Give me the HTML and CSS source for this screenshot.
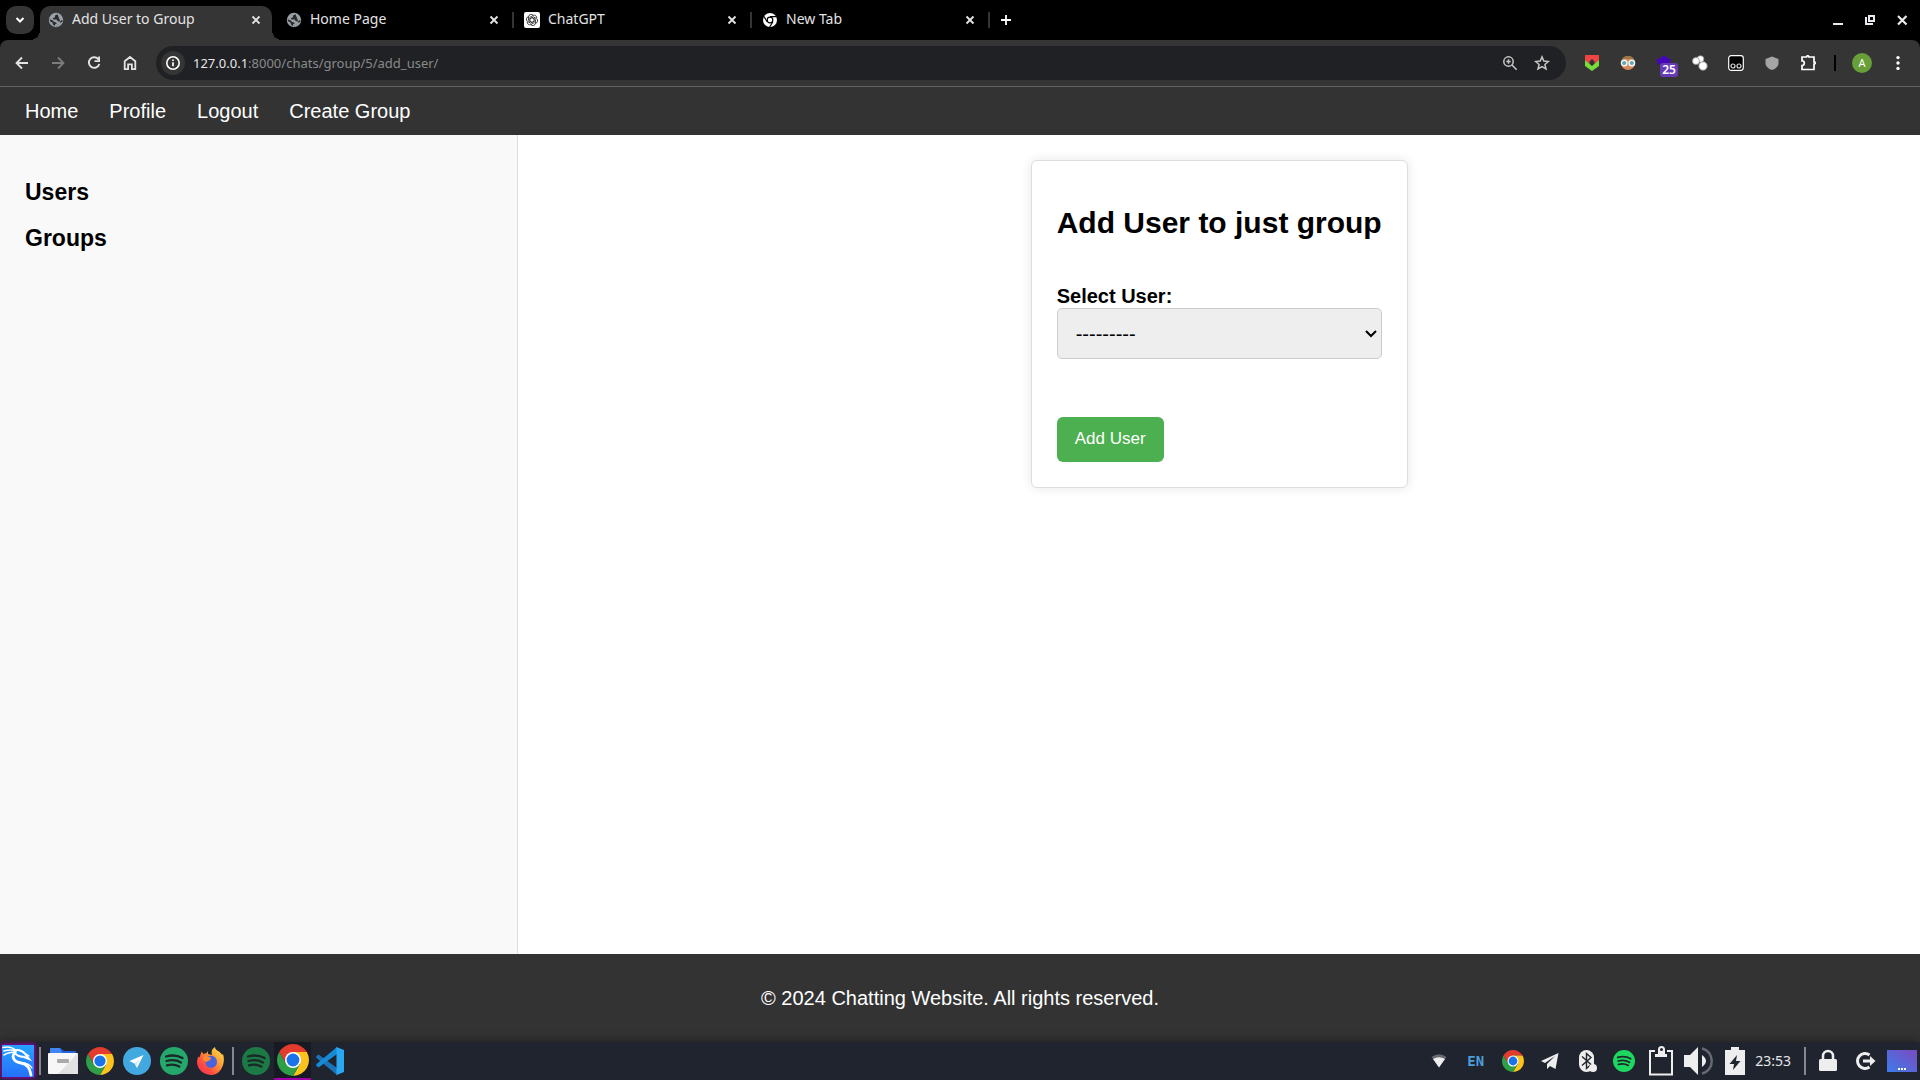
FILE: index.html
```html
<!DOCTYPE html>
<html lang="en">
<head>
<meta charset="utf-8">
<title>Add User to Group</title>
<link rel="stylesheet" href="styles.css">
</head>
<body>
<svg class="defs" aria-hidden="true">
  <symbol id="chrome" viewBox="0 0 48 48">
    <path fill="#e33b2e" d="M4.950 13A22 22 0 0 1 43.050 13H24L14.470 29.500Z"/>
    <path fill="#fcc31e" d="M43.050 13A22 22 0 0 1 24 46L33.530 29.500 24 13Z"/>
    <path fill="#2c9f48" d="M24 46A22 22 0 0 1 4.950 13L14.470 29.500H33.530Z"/>
    <circle cx="24" cy="24" r="11" fill="#fff"/><circle cx="24" cy="24" r="8.800" fill="#1a73e8"/>
  </symbol>
  <symbol id="spotify" viewBox="0 0 28 28">
    <circle cx="14" cy="14" r="14" fill="currentColor"/>
    <path d="M6 9.500c5.500-1.600 12-1 16.500 1.600M6.500 14c5-1.400 10.500-.8 14.500 1.500M7 18.300c4.200-1.200 8.800-.7 12.300 1.300" fill="none" stroke="#1b2a28" stroke-width="2.300" stroke-linecap="round"/>
  </symbol>
  <symbol id="globe" viewBox="0 0 16 16">
    <circle cx="8" cy="8" r="7.200" fill="#9aa0a6"/>
    <path fill="#2b2c2f" d="M9.500 2.200 7 3.400v1.800L4.800 6.300l.6 1.200h3.200l1.200 1.800 2 .2 1.700-1.300 1-.2-.3 2-2 .8-1.500 1.900-1.700.3-.4 1.600-1.800-.2.200-2 1.600-.6-.4-1.400-2-.3L4.800 8.500 1.800 7.200 2 9.200l2.400 1.200.6 2 1.800 1.900 1.200.3 1.200-1.600 2-.8 1.200-2.400z"/>
  </symbol>
  <symbol id="close" viewBox="0 0 16 16"><path d="m4.500 4.500 7 7m0-7-7 7" fill="none" stroke="currentColor" stroke-width="1.900"/></symbol>
</svg>

<header class="browser">
  <div class="tabstrip">
    <button class="tab-search" aria-label="Search tabs"><svg width="12" height="12" viewBox="0 0 12 12"><path d="m2.500 4 3.500 3.500L9.500 4" fill="none" stroke="#fff" stroke-width="2"/></svg></button>
    <div class="tabs">
      <div class="tab active"><svg class="favicon"><use href="#globe"/></svg><span>Add User to Group</span><button aria-label="Close tab"><svg><use href="#close"/></svg></button></div>
      <div class="tab"><svg class="favicon"><use href="#globe"/></svg><span>Home Page</span><button aria-label="Close tab"><svg><use href="#close"/></svg></button></div>
      <div class="tab"><svg class="favicon" viewBox="0 0 16 16"><rect width="16" height="16" rx="2" fill="#fff"/><g fill="none" stroke="#222" stroke-width=".8"><path id="petal" d="M6 9.800V5.200l3-1.700a2.500 2.500 0 0 1 3.600 3"/><use href="#petal" transform="rotate(60 8 8)"/><use href="#petal" transform="rotate(120 8 8)"/><use href="#petal" transform="rotate(180 8 8)"/><use href="#petal" transform="rotate(240 8 8)"/><use href="#petal" transform="rotate(300 8 8)"/></g></svg><span>ChatGPT</span><button aria-label="Close tab"><svg><use href="#close"/></svg></button></div>
      <div class="tab"><svg class="favicon" viewBox="0 0 16 16"><circle cx="8" cy="8" r="7" fill="#fff"/><circle cx="8" cy="8" r="3.400" fill="#000"/><circle cx="8" cy="8" r="2.200" fill="#fff"/><path d="M8 4.600h6.500M5.100 9.700 1.800 4.200M10.900 9.700 7.700 15" stroke="#000" stroke-width="1.200"/></svg><span>New Tab</span><button aria-label="Close tab"><svg><use href="#close"/></svg></button></div>
    </div>
    <button class="new-tab" aria-label="New tab"><svg width="16" height="16" viewBox="0 0 16 16"><path d="M8 3v10M3 8h10" stroke="#fff" stroke-width="1.800"/></svg></button>
    <div class="window-controls">
      <button aria-label="Minimize"><svg viewBox="0 0 16 16"><path d="M3 12h10" stroke="#e8eaed" stroke-width="2"/></svg></button>
      <button aria-label="Restore"><svg viewBox="0 0 16 16"><path d="M7 4h5v5H7zM4 5v7h7" fill="none" stroke="#e8eaed" stroke-width="2"/></svg></button>
      <button aria-label="Close window"><svg viewBox="0 0 16 16"><path d="m4 4 8.500 8.500m0-8.500L4 12.500" stroke="#e8eaed" stroke-width="2.200"/></svg></button>
    </div>
  </div>

  <div class="toolbar">
    <button aria-label="Back"><svg viewBox="0 0 16 16"><path d="M14 8H3M8 2.500 2.500 8 8 13.500" fill="none" stroke="#e3e3e3" stroke-width="1.800"/></svg></button>
    <button aria-label="Forward"><svg viewBox="0 0 16 16"><path d="M2 8h11M8 2.500 13.500 8 8 13.500" fill="none" stroke="#7c7c7c" stroke-width="1.800"/></svg></button>
    <button aria-label="Reload"><svg viewBox="0 0 16 16"><path d="M12.600 4.600A5.300 5.300 0 1 0 13.300 9" fill="none" stroke="#e3e3e3" stroke-width="1.900"/><path d="M14 1.500V7H8.500V5.300h3.700V1.500z" fill="#e3e3e3"/></svg></button>
    <button aria-label="Home"><svg viewBox="0 0 16 16"><path d="M2.700 14.200V6.300L8 2l5.300 4.300v7.900H9.900V9.300H6.100v4.900z" fill="none" stroke="#e3e3e3" stroke-width="1.800"/></svg></button>
    <div class="omnibox">
      <button class="site-info" aria-label="Site information"><svg viewBox="0 0 16 16"><circle cx="8" cy="8" r="6.200" fill="none" stroke="#fff" stroke-width="1.600"/><path d="M8 7.200v4M8 4.500v1.600" stroke="#fff" stroke-width="1.700"/></svg></button>
      <div class="url" role="textbox" aria-label="Address" contenteditable="true" spellcheck="false"><b>127.0.0.1</b>:8000/chats/group/5/add_user/</div>
      <button aria-label="Zoom"><svg viewBox="0 0 16 16"><circle cx="6.500" cy="6.500" r="4.700" fill="none" stroke="#c7c7c7" stroke-width="1.500"/><path d="m10 10 4.700 4.700M6.500 4.300v4.400M4.300 6.500h4.400" stroke="#c7c7c7" stroke-width="1.500"/></svg></button>
      <button aria-label="Bookmark"><svg viewBox="0 0 16 16"><path d="m8 1.900 1.800 4.200 4.600.4-3.500 3 1.100 4.500-4-2.400L4 14l1.100-4.500-3.500-3 4.600-.4z" fill="none" stroke="#c7c7c7" stroke-width="1.500"/></svg></button>
    </div>
    <div class="extensions">
      <button aria-label="Check extension"><svg viewBox="0 0 16 16"><path fill="#ef4444" d="M1 0h14v5l-4 4-3-4-3 4-4-4z"/><path fill="#76dd3a" d="m1 5 4 3.500L8 11l7-6v6l-7 5-7-5z"/><path fill="#333" d="m8 4 3 3-3 3-3-3z"/></svg></button>
      <button aria-label="Glasses extension"><svg viewBox="0 0 16 16"><circle cx="8" cy="8" r="7" fill="#d98a5b"/><path fill="#9a7848" d="M1.200 6.500C2-1 14-1 14.800 6.500L11 4H5z"/><g fill="#62a9b4" stroke="#f3f6f6" stroke-width="1.400"><circle cx="4.200" cy="8" r="2.800"/><circle cx="11.800" cy="8" r="2.800"/></g></svg></button>
      <button class="counter" aria-label="Notifications extension"><svg viewBox="0 0 16 16"><path fill="#4506b8" d="m8 .5 8 5-2 1v3H3V8L1 10V8l1-1.500-2-1z"/></svg><span>25</span></button>
      <button aria-label="Circles extension"><svg viewBox="0 0 16 16"><g fill="#fff" stroke="#999" stroke-width=".8"><circle cx="8.500" cy="4" r="3.300"/><circle cx="4" cy="6" r="3.500"/><circle cx="11" cy="11" r="4.200"/></g></svg></button>
      <button aria-label="Script extension"><svg viewBox="0 0 16 16"><rect x=".7" y=".7" width="14.600" height="14.600" rx="2.500" fill="#000" stroke="#fff" stroke-width="1.200"/><g fill="none" stroke="#ddd" stroke-width="1.200"><circle cx="5" cy="11" r="2"/><circle cx="11" cy="11" r="2"/></g></svg></button>
      <button aria-label="Shield extension"><svg viewBox="0 0 16 16"><path fill="#a5a5a5" d="M8 1.500 14.500 4v4c0 3.500-3 5.800-6.500 7C4.500 13.800 1.500 11.500 1.500 8V4z"/></svg></button>
      <button aria-label="Extensions"><svg viewBox="0 0 16 16"><path fill="none" stroke="#fff" stroke-width="1.700" d="M2 2h4.500a1.200 1.200 0 0 1 2.400 0H14v4.800a1.200 1.200 0 0 1 0 2.400v5.300H2v-4a2.300 2.300 0 0 0 0-4.600z"/></svg></button>
      <i class="divider"></i>
      <button aria-label="Profile"><span class="avatar">A</span></button>
      <button aria-label="Menu"><svg viewBox="0 0 16 16" fill="#fff"><circle cx="8" cy="2.600" r="1.700"/><circle cx="8" cy="8" r="1.700"/><circle cx="8" cy="13.400" r="1.700"/></svg></button>
    </div>
  </div>
</header>

<nav class="site-nav">
  <a href="#">Home</a><a href="#">Profile</a><a href="#">Logout</a><a href="#">Create Group</a>
</nav>

<div class="page">
  <aside class="sidebar">
    <h3>Users</h3>
    <h3>Groups</h3>
  </aside>
  <main class="content">
    <form class="card">
      <h2>Add User to just group</h2>
      <label for="user">Select User:</label>
      <select id="user"><option>---------</option></select>
      <button type="submit">Add User</button>
    </form>
  </main>
</div>

<footer class="site-footer">© 2024 Chatting Website. All rights reserved.</footer>

<div class="taskbar">
  <button class="menu" aria-label="Applications"><svg class="kali" viewBox="0 0 32 32"><defs><linearGradient id="kg" x2="0" y2="1"><stop stop-color="#25a3ff"/><stop offset="1" stop-color="#2670fb"/></linearGradient></defs><rect width="32" height="32" fill="url(#kg)"/><g fill="none" stroke="#fff" stroke-linecap="round"><path d="M1 2.500c5-1 9-.5 13 3M2 6c5-1.500 9-1 12 0M2 10c4-2.500 7-3 12-3" stroke-width="1.500"/><path d="M13 5c5-.5 8 1 10 4l4 5-5-2c-4-.5-8-2-9-4" stroke-width="2"/><path d="M13 7c-4 5-1 10 6 11 6 .8 9 5 10 12" stroke-width="2.800"/><path d="M20 18c5 0 8 2 10 5M20 6l7 5" stroke-width="1.300"/></g></svg></button>
  <i class="divider"></i>
  <button aria-label="Files"><svg viewBox="0 0 30 28"><path fill="#2464d8" d="M2 2q0-1 1-1h9l4 3h11q1 0 1 1v7H2z"/><path fill="#4285f4" d="M2 2q0-1 1-1h9l2 5H2z"/><rect y="6" width="30" height="21" rx="1" fill="#f7f7f7"/><path fill="#e2e2e2" d="M30 6v21H10z"/><rect x="9" y="12" width="12" height="4" rx="1" fill="#aaa"/></svg></button>
  <button aria-label="Chrome"><svg viewBox="2 2 44 44"><use href="#chrome" width="48" height="48"/></svg></button>
  <button aria-label="Telegram"><svg viewBox="0 0 28 28"><circle cx="14" cy="14" r="14" fill="#42a8e0"/><path fill="#fff" d="M20.500 8 6.500 14l5 2.500L14 21z"/><path fill="#c6e4f5" d="m11.500 16.500 5-4-3 4.500.5 4z"/></svg></button>
  <button aria-label="Spotify"><svg class="spotify"><use href="#spotify"/></svg></button>
  <button aria-label="Firefox"><svg viewBox="0 0 28 28"><defs><linearGradient id="ff" x1="1" y1="0" x2="0" y2="1"><stop stop-color="#fff04f"/><stop offset=".35" stop-color="#ffa436"/><stop offset=".7" stop-color="#ff4b3e"/><stop offset="1" stop-color="#e9276b"/></linearGradient></defs><path fill="url(#ff)" d="M4.500 4.500 6.500 7l3-1 1.500-2v3l4 1c-1-4 0-6 3-8 0 4 6 4 7 8l1-1c3 9-2 21-12 21C3 28-3 17 1.500 9.500l1 1z"/><path fill="#4a62db" d="M10 10c5-3 10 0 10 5 0 6-8 8-11 3-1-2-.5-4 1-4l3-.5z"/><path fill="#ff8c2f" d="M6 10c4-1 7 0 8 1 0 2-3 2-4 4-2-1-4-2-4-5z"/></svg></button>
  <i class="divider"></i>
  <button aria-label="Spotify window"><svg class="spotify-dim"><use href="#spotify"/></svg></button>
  <button class="running" aria-label="Chrome window"><svg class="large" viewBox="2 2 44 44"><use href="#chrome" width="48" height="48"/></svg></button>
  <button aria-label="Visual Studio Code"><svg viewBox="0 0 28 28"><path fill="#1c74b8" d="m0 9.500 2.500-2L21 21v7L.5 11z"/><path fill="#158bd5" d="m0 18.500 2.500 2L21 7V0L.5 17z"/><path fill="#29a8f2" d="m20.500 0 7.500 3v22l-7.500 3z"/></svg></button>

  <div class="tray">
    <button aria-label="Wi-Fi"><svg viewBox="0 0 28 28"><path fill="#666971" d="M6.500 10q7.500-5.500 15 0L14 20z"/><path fill="#eee" d="M8 12q6-3.500 12 0l-6 8.500z"/></svg></button>
    <button class="lang">EN</button>
    <button aria-label="Chrome notifications"><svg class="small" viewBox="2 2 44 44"><use href="#chrome" width="48" height="48"/></svg></button>
    <button aria-label="Telegram messages"><svg viewBox="0 0 28 28"><path fill="#eee" d="M22.500 6 5 14l4 2 10-7-8 8v5l3-3 5.500 3z"/></svg></button>
    <button aria-label="Bluetooth"><svg viewBox="0 0 28 28"><rect x="6" y="3" width="15" height="22" rx="7.500" fill="#eee"/><path d="m9 9.500 9 8-4.500 4V6.500l4.500 4-9 8" fill="none" stroke="#20242f" stroke-width="1.400"/><circle cx="20" cy="21" r="4" fill="#eee"/></svg></button>
    <button aria-label="Spotify player"><svg class="spotify-tray small"><use href="#spotify"/></svg></button>
    <button aria-label="Clipboard"><svg class="large" viewBox="0 0 32 32"><path d="M10 6H5v23.500h22V6h-5" fill="none" stroke="#eee" stroke-width="2"/><path fill="#eee" d="M10 12V9h3V4.500a3.500 3.500 0 0 1 7 0V9h2v3z"/><circle cx="16.500" cy="4.500" r="1.500" fill="#20242f"/></svg></button>
    <button aria-label="Volume"><svg class="large" viewBox="0 0 32 32"><path fill="#eee" d="M2 10h6l8-8v28l-8-8H2zM20 10q8 6 0 12z"/><path d="M20 3.500c13 3 13 22 0 25" fill="none" stroke="#666971" stroke-width="2.500"/></svg></button>
    <button aria-label="Battery"><svg viewBox="0 0 28 28"><path fill="#eee" d="M10 0h8v3h6v25H4V3h6z"/><path fill="#20242f" d="M16 8 8.500 17H13l-1 6 7.500-9H15z"/></svg></button>
    <time>23:53</time>
    <i class="divider"></i>
    <button aria-label="Lock"><svg viewBox="0 0 28 28"><rect x="5" y="12" width="18" height="12" rx="1.500" fill="#eee"/><path d="M9 13V9a5 5 0 0 1 10 0v4" fill="none" stroke="#eee" stroke-width="2.500"/></svg></button>
    <button aria-label="Log out"><svg viewBox="0 0 28 28"><path d="M18.500 8a7.500 7.500 0 1 0 0 12M12 14h9" fill="none" stroke="#eee" stroke-width="3"/><path fill="#eee" d="m19 9 5.500 5-5.500 5z"/></svg></button>
    <button aria-label="Show desktop"><svg class="large" viewBox="0 0 32 32"><defs><linearGradient id="dg" x1="0" y1="1" x2="1" y2="0"><stop stop-color="#3d7bea"/><stop offset="1" stop-color="#7a4bc0"/></linearGradient></defs><rect x="1" y="5" width="30" height="22" fill="url(#dg)"/><path d="M12 24h2m1 0h2m1 0h2" stroke="#fff" stroke-width="2"/></svg></button>
  </div>
</div>
</body>
</html>
```
FILE: styles.css
```css
* { box-sizing: border-box; }

body {
  margin: 0;
  min-height: 100vh;
  display: flex;
  flex-direction: column;
  background: #fff;
  color: #000;
  font: 20px/23px "Liberation Sans", Arial, sans-serif;
}

button {
  margin: 0;
  padding: 0;
  border: 0;
  background: none;
  color: inherit;
  font: inherit;
}

svg { display: block; }
.defs { position: absolute; width: 0; height: 0; }

/* Browser chrome */
.browser { background: #000; font: 14px/20px "Noto Sans", sans-serif; }

.tabstrip {
  display: flex;
  align-items: center;
  height: 40px;
  padding: 0 2px 0 6px;
  color: #e3e3e3;
}
.tab-search {
  display: grid;
  place-items: center;
  width: 28px;
  height: 28px;
  border-radius: 10px;
  background: #353535;
}
.tabs {
  display: flex;
  align-self: stretch;
  gap: 6px;
  margin: 6px 6px 0;
}
.tab {
  position: relative;
  display: flex;
  align-items: center;
  gap: 8px;
  width: 232px;
  padding: 0 8px 6px;
}
.tab span { flex: 1; padding-bottom: 2px; white-space: nowrap; }
.tab svg { width: 16px; height: 16px; }
.tab.active { background: #353535; border-radius: 10px 10px 0 0; }
.tab.active::before,
.tab.active::after {
  content: "";
  position: absolute;
  bottom: 0;
  width: 10px;
  height: 10px;
}
.tab.active::before { left: -10px; background: radial-gradient(circle at 0 0, transparent 10px, #353535 10px); }
.tab.active::after { right: -10px; background: radial-gradient(circle at 100% 0, transparent 10px, #353535 10px); }
.tab:not(.active)::after {
  content: "";
  position: absolute;
  top: 6px;
  right: -4px;
  width: 2px;
  height: 16px;
  background: #353535;
}
.new-tab { display: grid; place-items: center; width: 28px; height: 28px; }
.window-controls { display: flex; margin-left: auto; }
.window-controls button { display: grid; place-items: center; width: 32px; height: 32px; }
.window-controls svg { width: 16px; height: 16px; }

.toolbar {
  display: flex;
  align-items: center;
  height: 47px;
  padding: 0 4px;
  border-bottom: 1px solid #636363;
  border-radius: 8px 8px 0 0;
  background: #353535;
}
.toolbar button { display: grid; place-items: center; width: 36px; height: 34px; }
.toolbar svg { width: 16px; height: 16px; }
.omnibox {
  flex: 1;
  display: flex;
  align-items: center;
  height: 34px;
  margin: 0 8px;
  padding: 0 8px 0 5px;
  border-radius: 17px;
  background: #202124;
}
.omnibox button { width: 32px; }
.omnibox .site-info { width: 24px; height: 24px; border-radius: 50%; background: #353535; }
.url { flex: 1; margin-left: 8px; color: #8a8a8a; font-size: 13px; }
.url b { color: #e8e8e8; font-weight: 400; }
.extensions { display: flex; align-items: center; }
.extensions .divider { width: 2px; height: 16px; margin: 0 8px; background: #000; }
.counter { position: relative; }
.counter span {
  position: absolute;
  right: 4px;
  bottom: 3px;
  width: 18px;
  height: 14px;
  border-radius: 3px;
  background: #673ab7;
  color: #fff;
  font-size: 12px;
  font-weight: 600;
  line-height: 14px;
  text-align: center;
}
.avatar {
  width: 20px;
  height: 20px;
  border-radius: 50%;
  background: #689f38;
  color: #fff;
  font-size: 11px;
  text-align: center;
}

/* Site */
.site-nav {
  display: flex;
  align-items: center;
  gap: 31px;
  height: 48px;
  padding: 0 25px;
  background: #333;
}
.site-nav a { color: #fff; text-decoration: none; }

.page { flex: 1; display: flex; }
.sidebar {
  width: 27%;
  padding: 44px 25px;
  border-right: 1px solid #ddd;
  background: #f9f9f9;
}
.sidebar h3 { margin: 0 0 20px; font-size: 23px; line-height: 26px; }
.content {
  flex: 1;
  display: flex;
  justify-content: center;
  align-items: flex-start;
  padding: 25px;
}
.card {
  display: flex;
  flex-direction: column;
  align-items: flex-start;
  padding: 25px;
  border: 1px solid #ddd;
  border-radius: 6px;
  background: #fff;
  box-shadow: 0 0 12px rgba(0, 0, 0, .1);
}
.card h2 { margin: 20px 0 45px; font-size: 30px; line-height: 34px; }
.card label { font-weight: 700; }
.card select {
  appearance: none;
  width: 100%;
  height: 51px;
  margin-bottom: 58px;
  padding: 1px 18px 0;
  border: 1px solid #ccc;
  border-radius: 5px;
  background: #eee url("data:image/svg+xml,%3Csvg xmlns='http://www.w3.org/2000/svg' width='12' height='8'%3E%3Cpath d='m1 1 5 5 5-5' fill='none' stroke='black' stroke-width='2'/%3E%3C/svg%3E") no-repeat right 4px center;
  color: #000;
  font: inherit;
}
.card button {
  padding: 12px 18px 14px;
  border-radius: 6px;
  background: #4caf50;
  color: #fff;
  font-size: 17px;
  line-height: 19px;
}
.site-footer {
  display: grid;
  place-items: center;
  height: 88px;
  background: #333;
  color: #fff;
}

/* Desktop panel */
.taskbar {
  display: flex;
  align-items: center;
  height: 38px;
  background: #20242f;
  box-shadow: 0 -1px 10px rgba(0, 0, 0, .4);
}
.taskbar button { display: grid; place-items: center; width: 37px; height: 38px; }
.taskbar .menu { width: 36px; }
.taskbar svg { width: 28px; height: 28px; }
.taskbar svg[viewBox="0 0 30 28"] { width: 30px; }
.taskbar .large, .taskbar .kali { width: 32px; height: 32px; }
.taskbar .small { width: 22px; height: 22px; }
.taskbar .kali { box-shadow: 0 0 4px 1px #a000b0; }
.taskbar .divider { width: 2px; height: 28px; margin: 0 3px; background: #85878c; }
.spotify { color: #24a86b; }
.spotify-dim { color: #1c7a45; }
.spotify-tray { color: #1ed760; }
.taskbar .running { background: #181a23; border-bottom: 2px solid #a000a8; }
.tray { display: flex; align-items: center; margin-left: auto; }
.tray .lang { color: #4b9fdc; font: bold 14px/20px "DejaVu Sans Mono", monospace; }
.tray time { margin: 0 10px 0 2px; color: #e4e6ea; font: 14px/20px "Noto Sans", sans-serif; }
```
